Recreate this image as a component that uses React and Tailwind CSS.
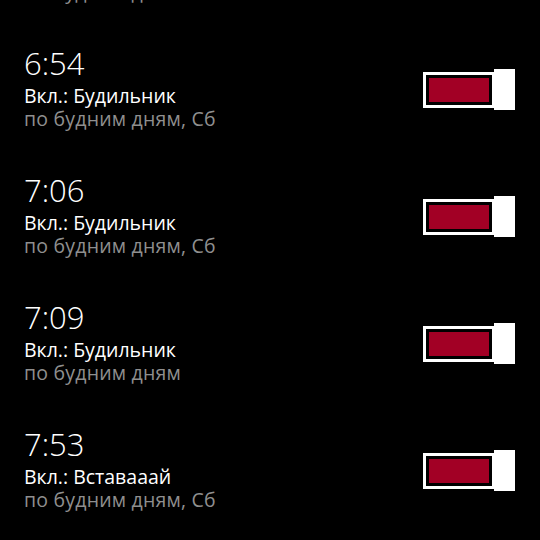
const alarms = [
  { time: "6:40", label: "Будильник", days: "по будним дням" },
  { time: "6:54", label: "Будильник", days: "по будним дням, Сб" },
  { time: "7:06", label: "Будильник", days: "по будним дням, Сб" },
  { time: "7:09", label: "Будильник", days: "по будним дням" },
  { time: "7:53", label: "Вставааай", days: "по будним дням, Сб" }
];

const Toggle = () => (
  <div className="flex items-center">
    <div className="h-[36px] w-[72px] border-[3px] border-white p-[3px]">
      <div className="h-full w-full bg-[#a20025]" />
    </div>
    <div className="-ml-[1px] h-[41px] w-[21px] bg-white" />
  </div>
);

export default function App() {
  return (
    <div className="h-[540px] w-[540px] overflow-hidden bg-black text-white" style={{ fontFamily: '"Open Sans", sans-serif' }}>
      <div className="-mt-[82px]">
        {alarms.map((a) => (
          <div key={a.time} className="flex h-[127px] items-start justify-between pl-[24px] pr-[25px]">
            <div className="flex flex-col">
              <p className="h-[36px] text-[31px] font-light leading-[36px]">{a.time}</p>
              <p className="mt-[3px] h-[23px] text-[19.5px] leading-[23px]">Вкл.: {a.label}</p>
              <p className="h-[23px] text-[19.5px] leading-[23px] tracking-[0.2px] text-[#8f8f8f]">{a.days}</p>
            </div>
            <div className="mt-[24px]">
              <Toggle />
            </div>
          </div>
        ))}
      </div>
    </div>
  );
}
